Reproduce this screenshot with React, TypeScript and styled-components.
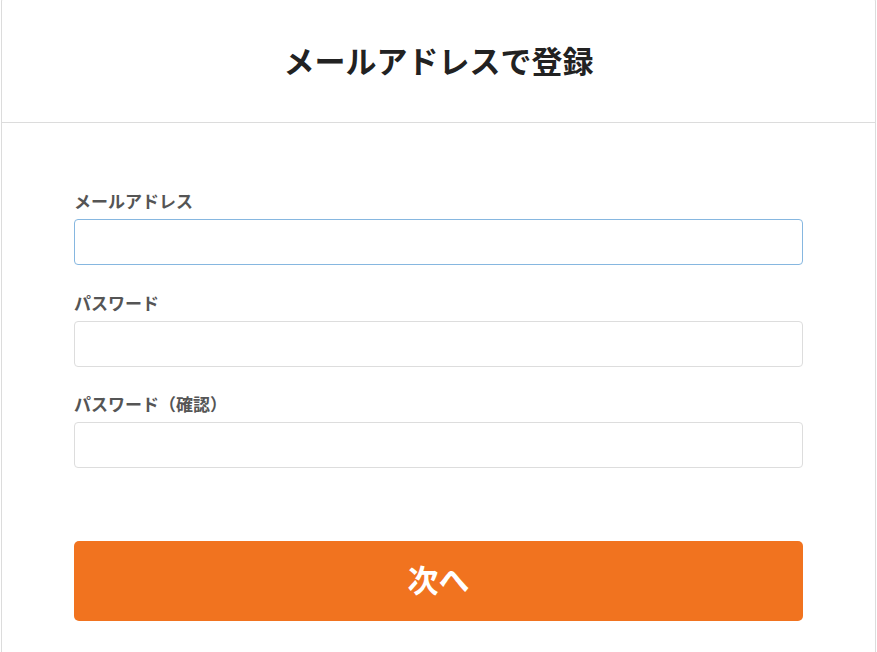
import React from "react";
import styled, { createGlobalStyle } from "styled-components";

const Global = createGlobalStyle`
  html, body { margin: 0; padding: 0; background: #ffffff; }
  body { font-family: "Noto Sans CJK JP", "Noto Sans", sans-serif; }
  * { box-sizing: border-box; }
`;

const Card = styled.div`
  margin: -3px 1px 0 1px;
  border: 1px solid #dcdcdc;
  border-radius: 4px;
  background: #fff;
  min-height: 700px;
`;

const Header = styled.header`
  height: 125px;
  padding-bottom: 2px;
  border-bottom: 1px solid #dcdcdc;
  display: flex;
  align-items: center;
  justify-content: center;
`;

const Title = styled.h1`
  margin: 0;
  font-size: 31px;
  font-weight: 700;
  color: #222;
  line-height: 1;
`;

const Body = styled.div`
  padding: 66px 72px 0 72px;
  display: flex;
  flex-direction: column;
`;

const Fields = styled.div`
  display: flex;
  flex-direction: column;
  gap: 25.5px;
`;

const Field = styled.div`
  display: flex;
  flex-direction: column;
`;

const Label = styled.label`
  font-size: 17px;
  font-weight: 700;
  color: #555;
  line-height: 23px;
  margin-bottom: 7px;
`;

const Input = styled.input<{ $focused?: boolean }>`
  height: 46px;
  width: 100%;
  border: 1px solid ${(p) => (p.$focused ? "#86b7e0" : "#dddddd")};
  border-radius: 4px;
  padding: 0 12px;
  font-size: 16px;
  outline: none;
  background: #fff;
`;

const Button = styled.button`
  margin-top: 73px;
  height: 80px;
  width: 100%;
  border: none;
  border-radius: 5px;
  background: #f1731f;
  color: #fff;
  font-family: "Noto Sans CJK JP", "Noto Sans", sans-serif;
  font-size: 31px;
  font-weight: 700;
  padding: 0 0 5px 0;
  cursor: pointer;
`;

export default function App() {
  return (
    <>
      <Global />
      <Card>
        <Header>
          <Title>メールアドレスで登録</Title>
        </Header>
        <Body>
          <Fields>
            <Field>
              <Label>メールアドレス</Label>
              <Input type="email" $focused />
            </Field>
            <Field>
              <Label>パスワード</Label>
              <Input type="password" />
            </Field>
            <Field>
              <Label>パスワード（確認）</Label>
              <Input type="password" />
            </Field>
          </Fields>
          <Button>次へ</Button>
        </Body>
      </Card>
    </>
  );
}
